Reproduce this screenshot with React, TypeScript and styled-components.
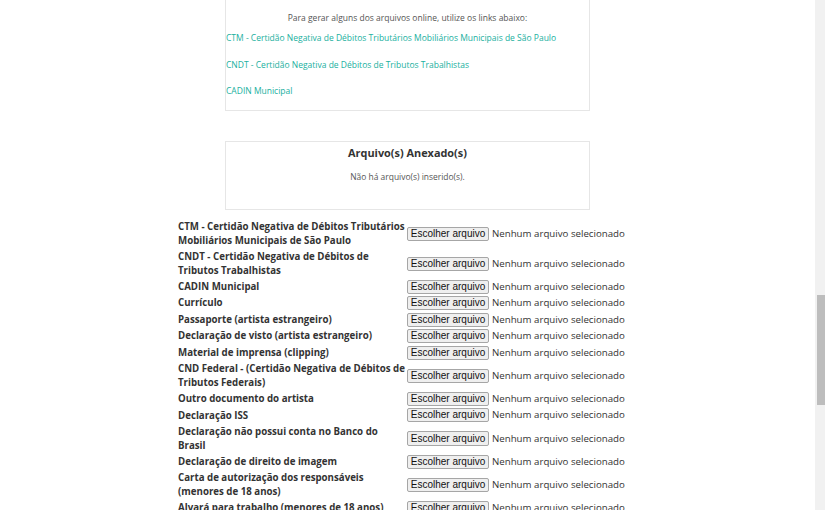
import React from "react";
import styled, { createGlobalStyle } from "styled-components";

const Global = createGlobalStyle`
  html, body { margin: 0; padding: 0; background: #fff; }
  body { font-family: "Open Sans", "Liberation Sans", sans-serif; overflow: hidden; }
`;

const Screen = styled.div`
  display: flex;
  width: 825px;
  height: 510px;
  overflow: hidden;
`;

const Viewport = styled.main`
  flex: 1;
  height: 510px;
  overflow: hidden;
`;

const Content = styled.div`
  margin-top: -20px;
  padding-left: 178px;
  display: flex;
  flex-direction: column;
`;

const Box = styled.section<{ $top?: number; $pt: number; $pb: number }>`
  margin-left: 47px;
  width: 363px;
  border: 1px solid #e6e6e6;
  margin-top: ${(p) => p.$top ?? 0}px;
  padding: ${(p) => p.$pt}px 0 ${(p) => p.$pb}px;
  display: flex;
  flex-direction: column;
`;

const Intro = styled.p`
  margin: 0 0 6px;
  font-size: 8.5px;
  line-height: 14px;
  color: #555;
  text-align: center;
`;

const LinkList = styled.div`
  display: flex;
  flex-direction: column;
  gap: 12.5px;
`;

const Link = styled.a`
  font-size: 8.5px;
  line-height: 14px;
  color: #1ab0a0;
  text-decoration: none;
  white-space: nowrap;
`;

const Heading = styled.h3`
  margin: 0 0 9px;
  font-size: 10.9px;
  line-height: 16px;
  font-weight: 700;
  color: #333;
  text-align: center;
`;

const Empty = styled.p`
  margin: 0;
  font-size: 8.45px;
  line-height: 14px;
  color: #555;
  text-align: center;
`;

const Form = styled.div`
  margin-top: 9px;
  display: flex;
  flex-direction: column;
`;

const Row = styled.div`
  display: flex;
  align-items: center;
  padding: 1.15px 0;
`;

const Label = styled.label`
  width: 229px;
  flex: none;
  font-size: 9.7px;
  line-height: 13.75px;
  font-weight: 700;
  color: #333;
  white-space: nowrap;
`;

const FileButton = styled.button`
  flex: none;
  height: 14.2px;
  width: 82px;
  padding: 0;
  margin: 0;
  border: 1px solid #a6a6a6;
  border-radius: 2px;
  background: #efefef;
  font-family: "Liberation Sans", Arial, sans-serif;
  font-size: 10px;
  line-height: 12px;
  color: #111;
  white-space: nowrap;
`;

const FileName = styled.span`
  margin-left: 3px;
  font-size: 9.7px;
  line-height: 14px;
  color: #333;
  white-space: nowrap;
`;

const Track = styled.div`
  width: 10px;
  height: 510px;
  background: #f1f1f1;
  display: flex;
  flex-direction: column;
  padding-top: 295px;
  box-sizing: border-box;
  align-items: flex-end;
`;

const Thumb = styled.div`
  width: 8px;
  height: 110px;
  background: #bdbdbd;
`;

const links = [
  "CTM - Certidão Negativa de Débitos Tributários Mobiliários Municipais de São Paulo",
  "CNDT - Certidão Negativa de Débitos de Tributos Trabalhistas",
  "CADIN Municipal",
];

const fields: string[][] = [
  ["CTM - Certidão Negativa de Débitos Tributários", "Mobiliários Municipais de São Paulo"],
  ["CNDT - Certidão Negativa de Débitos de", "Tributos Trabalhistas"],
  ["CADIN Municipal"],
  ["Currículo"],
  ["Passaporte (artista estrangeiro)"],
  ["Declaração de visto (artista estrangeiro)"],
  ["Material de imprensa (clipping)"],
  ["CND Federal - (Certidão Negativa de Débitos de", "Tributos Federais)"],
  ["Outro documento do artista"],
  ["Declaração ISS"],
  ["Declaração não possui conta no Banco do", "Brasil"],
  ["Declaração de direito de imagem"],
  ["Carta de autorização dos responsáveis", "(menores de 18 anos)"],
  ["Alvará para trabalho (menores de 18 anos)"],
  ["Outros documentos"],
];

export default function App() {
  return (
    <>
      <Global />
      <Screen>
        <Viewport>
          <Content>
            <Box $pt={30} $pb={12}>
              <Intro>Para gerar alguns dos arquivos online, utilize os links abaixo:</Intro>
              <LinkList>
                {links.map((l) => (
                  <Link key={l} href="#">
                    {l}
                  </Link>
                ))}
              </LinkList>
            </Box>
            <Box $top={30} $pt={3} $pb={25}>
              <Heading>Arquivo(s) Anexado(s)</Heading>
              <Empty>Não há arquivo(s) inserido(s).</Empty>
            </Box>
            <Form>
              {fields.map((lines, i) => (
                <Row key={i}>
                  <Label>
                    {lines.map((t, j) => (
                      <React.Fragment key={j}>
                        {j > 0 && <br />}
                        {t}
                      </React.Fragment>
                    ))}
                  </Label>
                  <FileButton type="button">Escolher arquivo</FileButton>
                  <FileName>Nenhum arquivo selecionado</FileName>
                </Row>
              ))}
            </Form>
          </Content>
        </Viewport>
        <Track>
          <Thumb />
        </Track>
      </Screen>
    </>
  );
}
